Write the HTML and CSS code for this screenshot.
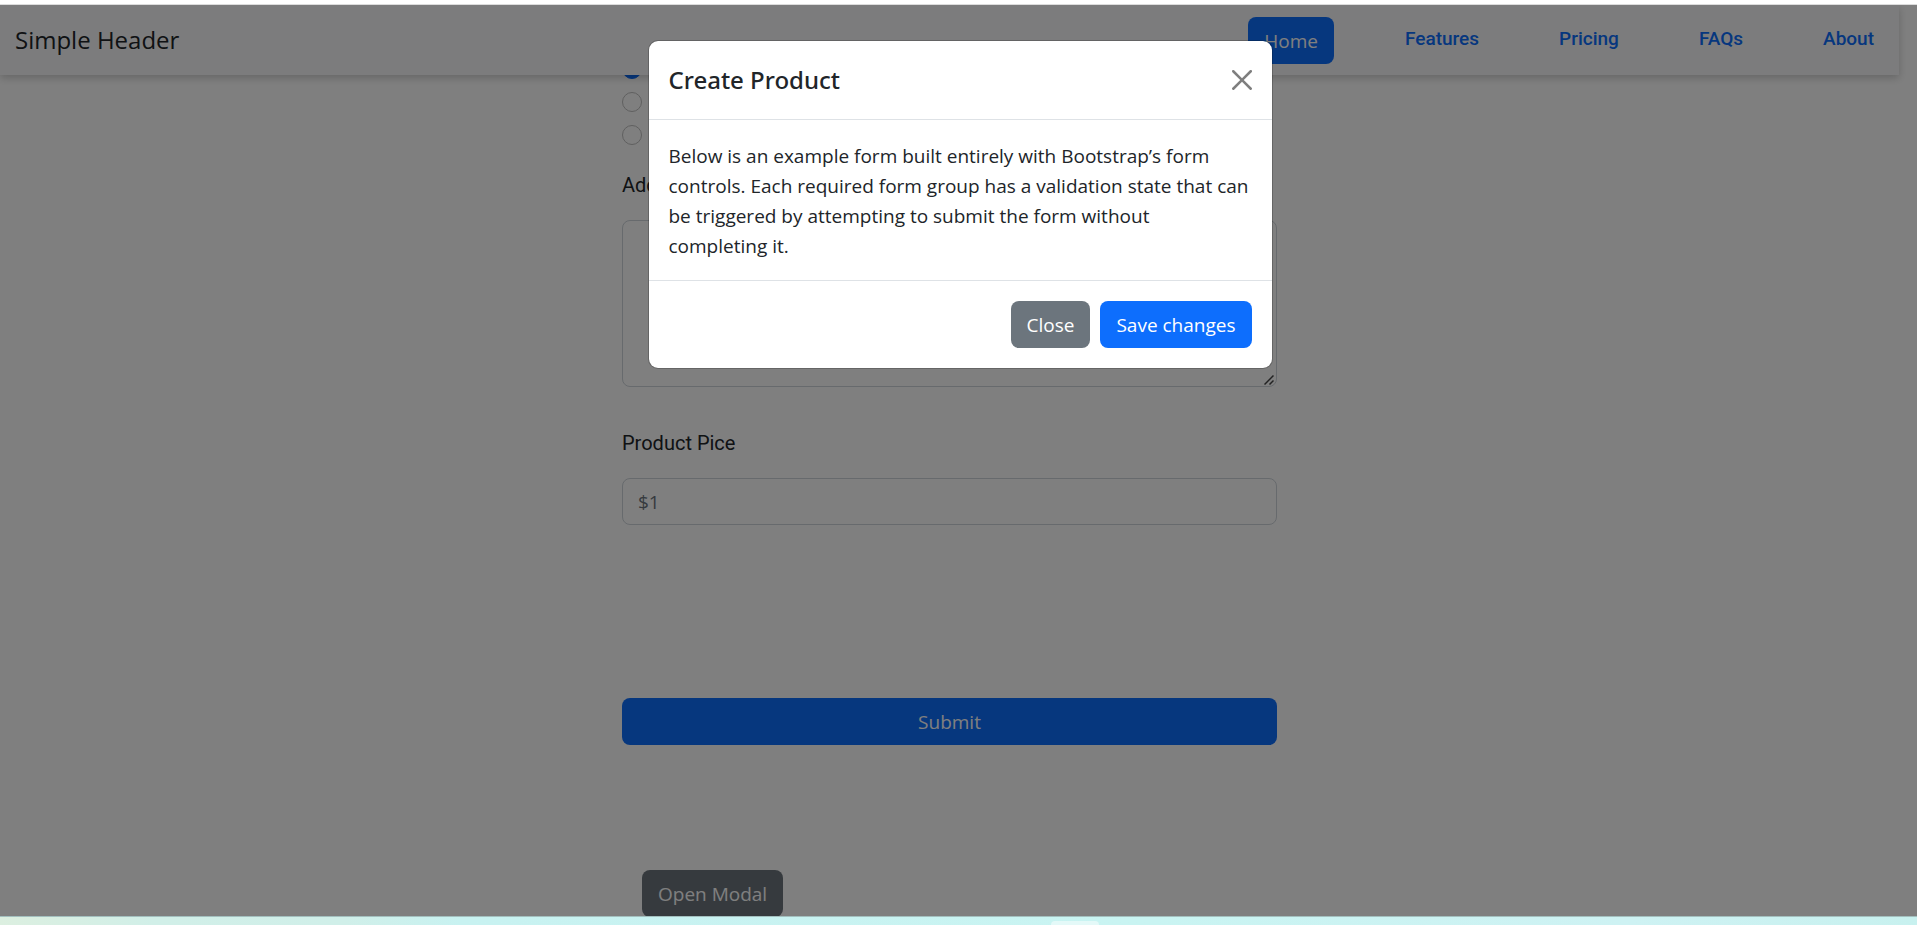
FILE: index.html
```html
<!DOCTYPE html>
<html lang="en">
<head>
<meta charset="utf-8">
<title>Create Product</title>
<link rel="stylesheet" href="styles.css">
</head>
<body>
<div class="window-top"></div>
<div class="viewport">
  <header class="navbar">
    <a class="brand" href="#">Simple Header</a>
    <nav class="nav">
      <a class="btn btn-primary" href="#">Home</a>
      <a class="nav-link" href="#">Features</a>
      <a class="nav-link" href="#">Pricing</a>
      <a class="nav-link" href="#">FAQs</a>
      <a class="nav-link" href="#">About</a>
    </nav>
  </header>
  <main class="page">
    <form class="product-form">
      <div class="radios">
        <input class="radio" type="radio" name="kind" aria-label="First option" checked>
        <input class="radio" type="radio" name="kind" aria-label="Second option">
        <input class="radio" type="radio" name="kind" aria-label="Third option">
      </div>
      <label class="label" for="details">Add</label>
      <div class="details-wrap">
        <textarea class="control details" id="details"></textarea>
        <svg class="grip" viewBox="0 0 10 10" width="10" height="10" aria-hidden="true"><path d="M.5 9.5l9-9M5.500 9.500l4-4" fill="none" stroke="#444" stroke-width="1.500"/></svg>
      </div>
      <label class="label price-label" for="price">Product Pice</label>
      <input class="control" id="price" type="text" placeholder="$1">
      <button class="btn btn-primary submit" type="button">Submit</button>
      <button class="btn btn-secondary open" type="button">Open Modal</button>
    </form>
  </main>
  <div class="backdrop"></div>
  <section class="modal" role="dialog" aria-labelledby="modal-title">
    <div class="modal-header">
      <h1 class="modal-title" id="modal-title">Create Product</h1>
      <button class="close" type="button" aria-label="Dismiss">
        <svg viewBox="0 0 16 16" width="20" height="20"><path fill="#000" d="M.293.293a1 1 0 0 1 1.414 0L8 6.586 14.293.293a1 1 0 1 1 1.414 1.414L9.414 8l6.293 6.293a1 1 0 0 1-1.414 1.414L8 9.414l-6.293 6.293a1 1 0 0 1-1.414-1.414L6.586 8 .293 1.707a1 1 0 0 1 0-1.414z"/></svg>
      </button>
    </div>
    <p class="modal-body">Below is an example form built entirely with Bootstrap’s form controls. Each required form group has a validation state that can be triggered by attempting to submit the form without completing it.</p>
    <div class="modal-footer">
      <button class="btn btn-secondary" type="button">Close</button>
      <button class="btn btn-primary" type="button">Save changes</button>
    </div>
  </section>
</div>
<div class="taskbar"><div class="taskbar-tab"></div></div>
</body>
</html>
```
FILE: styles.css
```css
* { box-sizing: border-box; }

body {
  margin: 0;
  height: 100vh;
  display: flex;
  flex-direction: column;
  overflow: hidden;
  font-family: "Open Sans", "Noto Sans", sans-serif;
  font-size: 19px;
  line-height: 30px;
  color: #212529;
  background: #fff;
}

.window-top {
  flex: none;
  height: 5px;
  border-bottom: 1px solid #dcdcdc;
}

.viewport {
  position: relative;
  flex: 1;
  min-height: 0;
  overflow: hidden;
}

.navbar {
  position: absolute;
  z-index: 1;
  top: 0;
  left: 0;
  right: 18px;
  height: 70px;
  padding: 0 25px 0 15px;
  display: flex;
  align-items: center;
  justify-content: space-between;
  background: #f8f9fa;
  box-shadow: 0 3px 8px rgba(0, 0, 0, 0.2);
}

.brand {
  font-size: 24px;
  color: #212529;
  text-decoration: none;
}

.nav {
  display: flex;
  align-items: center;
  gap: 80px;
}

.nav .btn { margin-right: -9px; }

.nav-link {
  padding-bottom: 2px;
  font-family: Roboto, sans-serif;
  font-size: 19px;
  font-weight: 500;
  color: #0d6efd;
  text-decoration: none;
}

.btn {
  padding: 9px 15px 7px;
  border: 1px solid transparent;
  border-radius: 8px;
  font: inherit;
  line-height: 29px;
  color: #fff;
  text-align: center;
  text-decoration: none;
  cursor: pointer;
}

.btn-primary { background: #0d6efd; }
.btn-secondary { background: #6c757d; }

.page { padding: 54px 18px 0 0; }

.product-form {
  width: 655px;
  margin: 0 auto;
  display: flex;
  flex-direction: column;
}

.radios {
  display: flex;
  flex-direction: column;
  gap: 13px;
}

.radio {
  appearance: none;
  width: 20px;
  height: 20px;
  margin: 0;
  border: 1px solid #bfbfbf;
  border-radius: 50%;
}

.radio:checked {
  border-color: #0d6efd;
  background: #0d6efd;
}

.label {
  margin: 25px 0 20px;
  font-family: Roboto, sans-serif;
  font-size: 20px;
}

.price-label { margin-top: 41px; }

.control {
  width: 100%;
  height: 47px;
  padding: 8px 15px;
  border: 1px solid #ced4da;
  border-radius: 8px;
  font: inherit;
  color: #212529;
  background: #fff;
}

.control::placeholder { color: #6c757d; opacity: 1; }

.details-wrap {
  position: relative;
  display: flex;
}

.details {
  height: 167px;
  resize: none;
}

.grip {
  position: absolute;
  right: 3px;
  bottom: 2px;
}

.submit { margin-top: 173px; }

.open {
  align-self: flex-start;
  margin: 125px 0 0 20px;
}

.backdrop {
  position: absolute;
  z-index: 2;
  inset: 0;
  background: rgba(0, 0, 0, 0.5);
}

.modal {
  position: absolute;
  z-index: 3;
  top: 35px;
  left: 0;
  right: 0;
  width: 625px;
  margin-left: calc(50% - 311px);
  border: 1px solid rgba(0, 0, 0, 0.2);
  border-radius: 10px;
  background: #fff;
  background-clip: padding-box;
}

.modal-header {
  display: flex;
  align-items: center;
  justify-content: space-between;
  padding: 20px;
  border-bottom: 1px solid #dee2e6;
}

.modal-title {
  margin: 0;
  font-family: "Noto Sans", sans-serif;
  font-size: 24px;
  font-weight: 500;
  line-height: 38px;
}

.close {
  display: flex;
  padding: 0;
  border: 0;
  background: none;
  opacity: 0.5;
  cursor: pointer;
}

.modal-body {
  margin: 0;
  padding: 21px 20px 19px;
}

.modal-footer {
  display: flex;
  justify-content: flex-end;
  gap: 10px;
  padding: 20px;
  border-top: 1px solid #dee2e6;
}

.taskbar {
  flex: none;
  height: 9px;
  padding: 4px 0 0 1051px;
  border-top: 1px solid #a3bfbe;
  background: linear-gradient(90deg, #dcefe0, #d1efe8 8%, #d0efe9 18%, #c8f2f1 24%, #c9f4f2 60%, #cef2f3 85%, #c8f1ef);
}

.taskbar-tab {
  width: 48px;
  height: 4px;
  border-radius: 4px 4px 0 0;
  background: #e4f9f8;
}
```
